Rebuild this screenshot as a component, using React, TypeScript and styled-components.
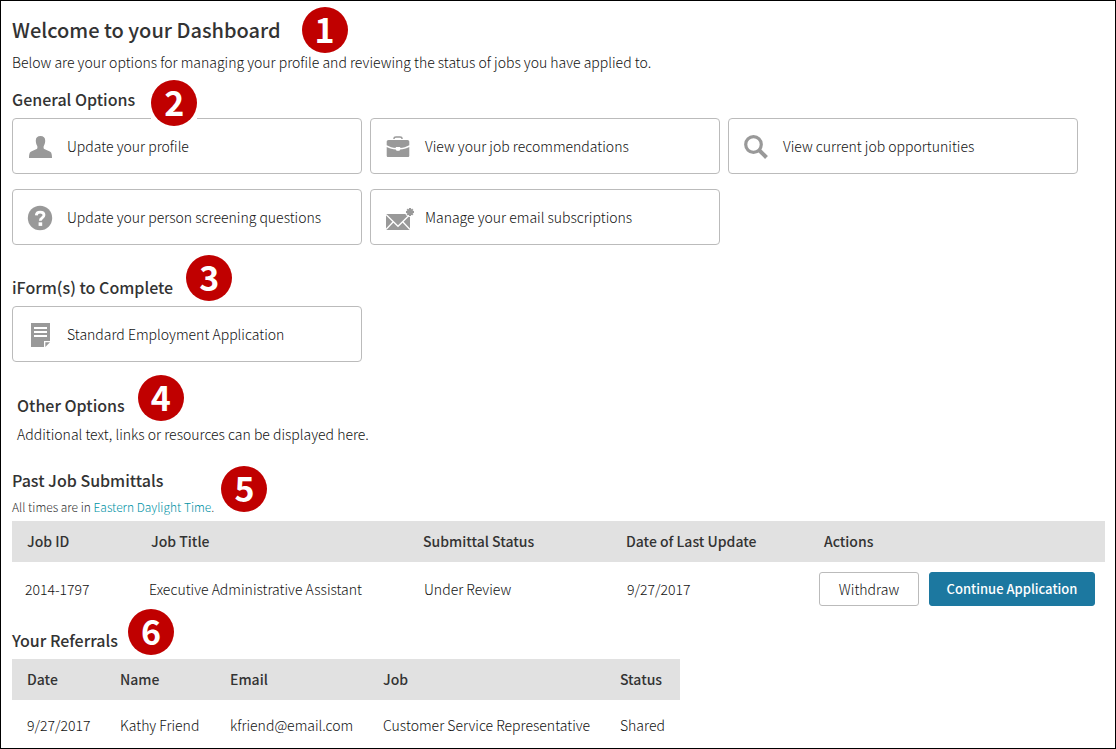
import React from "react";
import styled, { createGlobalStyle } from "styled-components";

const GlobalStyle = createGlobalStyle`
  *, *::before, *::after { box-sizing: border-box; }
  body {
    margin: 0;
    background: #fff;
    color: #111;
    font-family: "Noto Sans CJK SC", "Open Sans", sans-serif;
    font-size: 14px;
    font-weight: 300;
    line-height: 24px;
  }
`;

const Page = styled.main`
  min-height: 100vh;
  border: 1px solid #000;
  padding: 13px 10px 0 11px;
`;

const Title = styled.h1`
  position: relative;
  width: fit-content;
  margin: 0;
  color: #333;
  font-size: 20px;
  line-height: 32px;
  font-weight: 500;
`;

const Text = styled.p<{ $top: number }>`
  margin: ${(p) => p.$top}px 0 0;
`;

const Section = styled.section<{ $top: number; $indent?: number }>`
  margin-top: ${(p) => p.$top}px;
  padding-left: ${(p) => p.$indent ?? 0}px;
`;

const Heading = styled.h2`
  position: relative;
  width: fit-content;
  margin: 0;
  color: #333;
  font-size: 16px;
  line-height: 24px;
  font-weight: 500;
`;

const BadgeBox = styled.span<{ $gap: number; $rise: number }>`
  position: absolute;
  left: 100%;
  top: 50%;
  margin-left: ${(p) => p.$gap}px;
  margin-top: ${(p) => -23 - p.$rise}px;
  background: #fff;
`;

const BadgeDisc = styled.span`
  display: block;
  width: 46px;
  height: 46px;
  border-radius: 50%;
  background: #c00000;
  color: #fff;
  font-size: 34px;
  line-height: 44px;
  font-weight: 700;
  text-align: center;
`;

function Badge({ n, gap, rise }: { n: number; gap: number; rise: number }) {
  return (
    <BadgeBox $gap={gap} $rise={rise}>
      <BadgeDisc>{n}</BadgeDisc>
    </BadgeBox>
  );
}

const Cards = styled.nav`
  display: grid;
  grid-template-columns: repeat(auto-fill, 350px);
  gap: 15px 8px;
  margin-top: 7px;
`;

const Card = styled.a`
  display: flex;
  align-items: center;
  gap: 11px;
  height: 56px;
  padding: 0 11px;
  border: 1px solid #bbb;
  border-radius: 4px;
  color: inherit;
  text-decoration: none;
`;

const Icon = styled.svg`
  flex: none;
  width: 32px;
  height: 32px;
  color: #999;
  fill: currentColor;
`;

const PersonIcon = () => (
  <Icon viewBox="0 0 32 32" aria-hidden="true">
    <path d="M16.500 6c3 0 4.700 1.600 4.700 4.600 0 2-.4 3.800-1.300 5.100-.5.800-.5 2.800.3 3.400 1.200.8 4.300 1.600 6 2.600 1.400.8 1.800 3 1.800 6.300H5c0-3.300.4-5.500 1.800-6.300 1.700-1 4.800-1.800 6-2.600.8-.6.800-2.600.3-3.400-.9-1.300-1.300-3.100-1.300-5.100C11.800 7.600 13.500 6 16.500 6z" />
  </Icon>
);

const BriefcaseIcon = () => (
  <Icon viewBox="0 0 32 32" aria-hidden="true">
    <path d="M11.800 8.800c.2-1.300.9-1.800 2.200-1.800h4c1.300 0 2 .5 2.200 1.800" fill="none" stroke="currentColor" strokeWidth="1.600" />
    <path d="M6.500 10h19c1 0 1.800.8 1.800 1.800v3.400c-3 1.700-6 2.500-9.300 2.700V17h-4v.9c-3.300-.2-6.300-1-9.300-2.700v-3.400c0-1 .8-1.800 1.800-1.800z" />
    <path d="M4.700 17c3 1.400 6 2.300 9.300 2.600v.9h4v-.9c3.300-.3 6.300-1.200 9.300-2.600v8.700c0 .8-.6 1.300-1.300 1.300H6c-.7 0-1.300-.5-1.300-1.300z" />
    <path d="M13.500 17.500h5v1.500l-2.500 2-2.500-2z" fill="#fff" />
  </Icon>
);

const SearchIcon = () => (
  <Icon viewBox="0 0 32 32" aria-hidden="true">
    <circle cx="13.500" cy="14.500" r="7.800" fill="none" stroke="currentColor" strokeWidth="3.200" />
    <path d="M19.500 20.500l7 7" stroke="currentColor" strokeWidth="4" />
  </Icon>
);

const QuestionIcon = () => (
  <Icon viewBox="0 0 32 32" aria-hidden="true">
    <circle cx="16" cy="17" r="12.200" />
    <path d="M12.300 14.300c.2-2.200 1.700-3.200 3.800-3.200 2.200 0 3.900 1.100 3.900 3 0 2.900-3.700 2.700-3.700 5.600" fill="none" stroke="#fff" strokeWidth="2.800" />
    <path d="M14.600 21.300h3.600v3.600h-3.600z" fill="#fff" />
  </Icon>
);

const EnvelopeIcon = () => (
  <Icon viewBox="0 0 32 32" aria-hidden="true">
    <path d="M4 13h24v16H4z" />
    <path d="M4 13.500l12 11.800 12-11.800M4 28.500l7.300-7.700M28 28.500l-7.300-7.700" fill="none" stroke="#fff" strokeWidth="1.300" />
    <circle cx="28" cy="11" r="5" fill="#fff" />
    <path d="M28 7v8M24 11h8M25.200 8.200l5.600 5.600M30.800 8.200l-5.600 5.600" stroke="currentColor" strokeWidth="2" />
  </Icon>
);

const DocumentIcon = () => (
  <Icon viewBox="0 0 32 32" aria-hidden="true">
    <path d="M7 5h19v18h-6v6H7z" />
    <path d="M21.300 24.300H26L21.300 29z" />
    <path d="M10 10h13M10 14h13M10 18h13" stroke="#fff" strokeWidth="2" />
  </Icon>
);

const Note = styled.p`
  margin: 7px 0 6px;
  color: #333;
  font-size: 12px;
  line-height: 16px;
`;

const NoteLink = styled.a`
  color: #0092a5;
  text-decoration: none;
`;

const Table = styled.table`
  table-layout: fixed;
  border-collapse: collapse;
  text-align: left;

  th {
    height: 41px;
    padding: 0 0 2px 15px;
    background: #e1e1e1;
    color: #333;
    font-weight: 500;
    white-space: nowrap;
  }
  td {
    white-space: nowrap;
  }
`;

const SubmittalsTable = styled(Table)`
  width: 100%;

  td {
    padding: 10px 0 10px 16px;
  }
  td:nth-child(-n + 2) {
    padding-left: 13px;
  }
  td:last-child {
    padding: 10px;
  }
`;

const ReferralsTable = styled(Table)`
  width: 668px;
  margin-top: 7px;

  td {
    padding: 13px 0 10px 15px;
  }
`;

const Col = styled.col<{ $w?: number }>`
  width: ${(p) => (p.$w ? `${p.$w}px` : "auto")};
`;

const Actions = styled.div`
  display: flex;
  gap: 10px;
`;

const Button = styled.button`
  width: 100px;
  height: 34px;
  padding: 0;
  border: 1px solid #bbb;
  border-radius: 3px;
  background: #fff;
  color: #111;
  font: inherit;
`;

const PrimaryButton = styled(Button)`
  width: 166px;
  border-color: #1c78a0;
  background: #1c78a0;
  color: #fff;
  font-size: 13px;
  font-weight: 500;
`;

const generalOptions = [
  { label: "Update your profile", Glyph: PersonIcon },
  { label: "View your job recommendations", Glyph: BriefcaseIcon },
  { label: "View current job opportunities", Glyph: SearchIcon },
  { label: "Update your person screening questions", Glyph: QuestionIcon },
  { label: "Manage your email subscriptions", Glyph: EnvelopeIcon },
];

export default function App() {
  return (
    <>
      <GlobalStyle />
      <Page>
        <Title>
          Welcome to your Dashboard
          <Badge n={1} gap={21} rise={0} />
        </Title>
        <Text $top={4}>
          Below are your options for managing your profile and reviewing the status of jobs you have applied to.
        </Text>

        <Section $top={13}>
          <Heading>
            General Options
            <Badge n={2} gap={16} rise={-4} />
          </Heading>
          <Cards aria-label="General options">
            {generalOptions.map(({ label, Glyph }) => (
              <Card key={label} href="#">
                <Glyph />
                {label}
              </Card>
            ))}
          </Cards>
        </Section>

        <Section $top={30}>
          <Heading>
            iForm(s) to Complete
            <Badge n={3} gap={13} rise={9} />
          </Heading>
          <Cards aria-label="Forms to complete">
            <Card href="#">
              <DocumentIcon />
              Standard Employment Application
            </Card>
          </Cards>
        </Section>

        <Section $top={31} $indent={5}>
          <Heading>
            Other Options
            <Badge n={4} gap={13} rise={7} />
          </Heading>
          <Text $top={5}>Additional text, links or resources can be displayed here.</Text>
        </Section>

        <Section $top={22}>
          <Heading>
            Past Job Submittals
            <Badge n={5} gap={58} rise={-9} />
          </Heading>
          <Note>
            All times are in <NoteLink href="#">Eastern Daylight Time</NoteLink>.
          </Note>
          <SubmittalsTable>
            <colgroup>
              <Col $w={124} />
              <Col $w={272} />
              <Col $w={203} />
              <Col $w={198} />
              <Col />
            </colgroup>
            <thead>
              <tr>
                <th scope="col">Job ID</th>
                <th scope="col">Job Title</th>
                <th scope="col">Submittal Status</th>
                <th scope="col">Date of Last Update</th>
                <th scope="col">Actions</th>
              </tr>
            </thead>
            <tbody>
              <tr>
                <td>2014-1797</td>
                <td>Executive Administrative Assistant</td>
                <td>Under Review</td>
                <td>9/27/2017</td>
                <td>
                  <Actions>
                    <Button type="button">Withdraw</Button>
                    <PrimaryButton type="button">Continue Application</PrimaryButton>
                  </Actions>
                </td>
              </tr>
            </tbody>
          </SubmittalsTable>
        </Section>

        <Section $top={12}>
          <Heading>
            Your Referrals
            <Badge n={6} gap={10} rise={8} />
          </Heading>
          <ReferralsTable>
            <colgroup>
              <Col $w={93} />
              <Col $w={110} />
              <Col $w={153} />
              <Col $w={237} />
              <Col />
            </colgroup>
            <thead>
              <tr>
                <th scope="col">Date</th>
                <th scope="col">Name</th>
                <th scope="col">Email</th>
                <th scope="col">Job</th>
                <th scope="col">Status</th>
              </tr>
            </thead>
            <tbody>
              <tr>
                <td>9/27/2017</td>
                <td>Kathy Friend</td>
                <td>kfriend@email.com</td>
                <td>Customer Service Representative</td>
                <td>Shared</td>
              </tr>
            </tbody>
          </ReferralsTable>
        </Section>
      </Page>
    </>
  );
}
